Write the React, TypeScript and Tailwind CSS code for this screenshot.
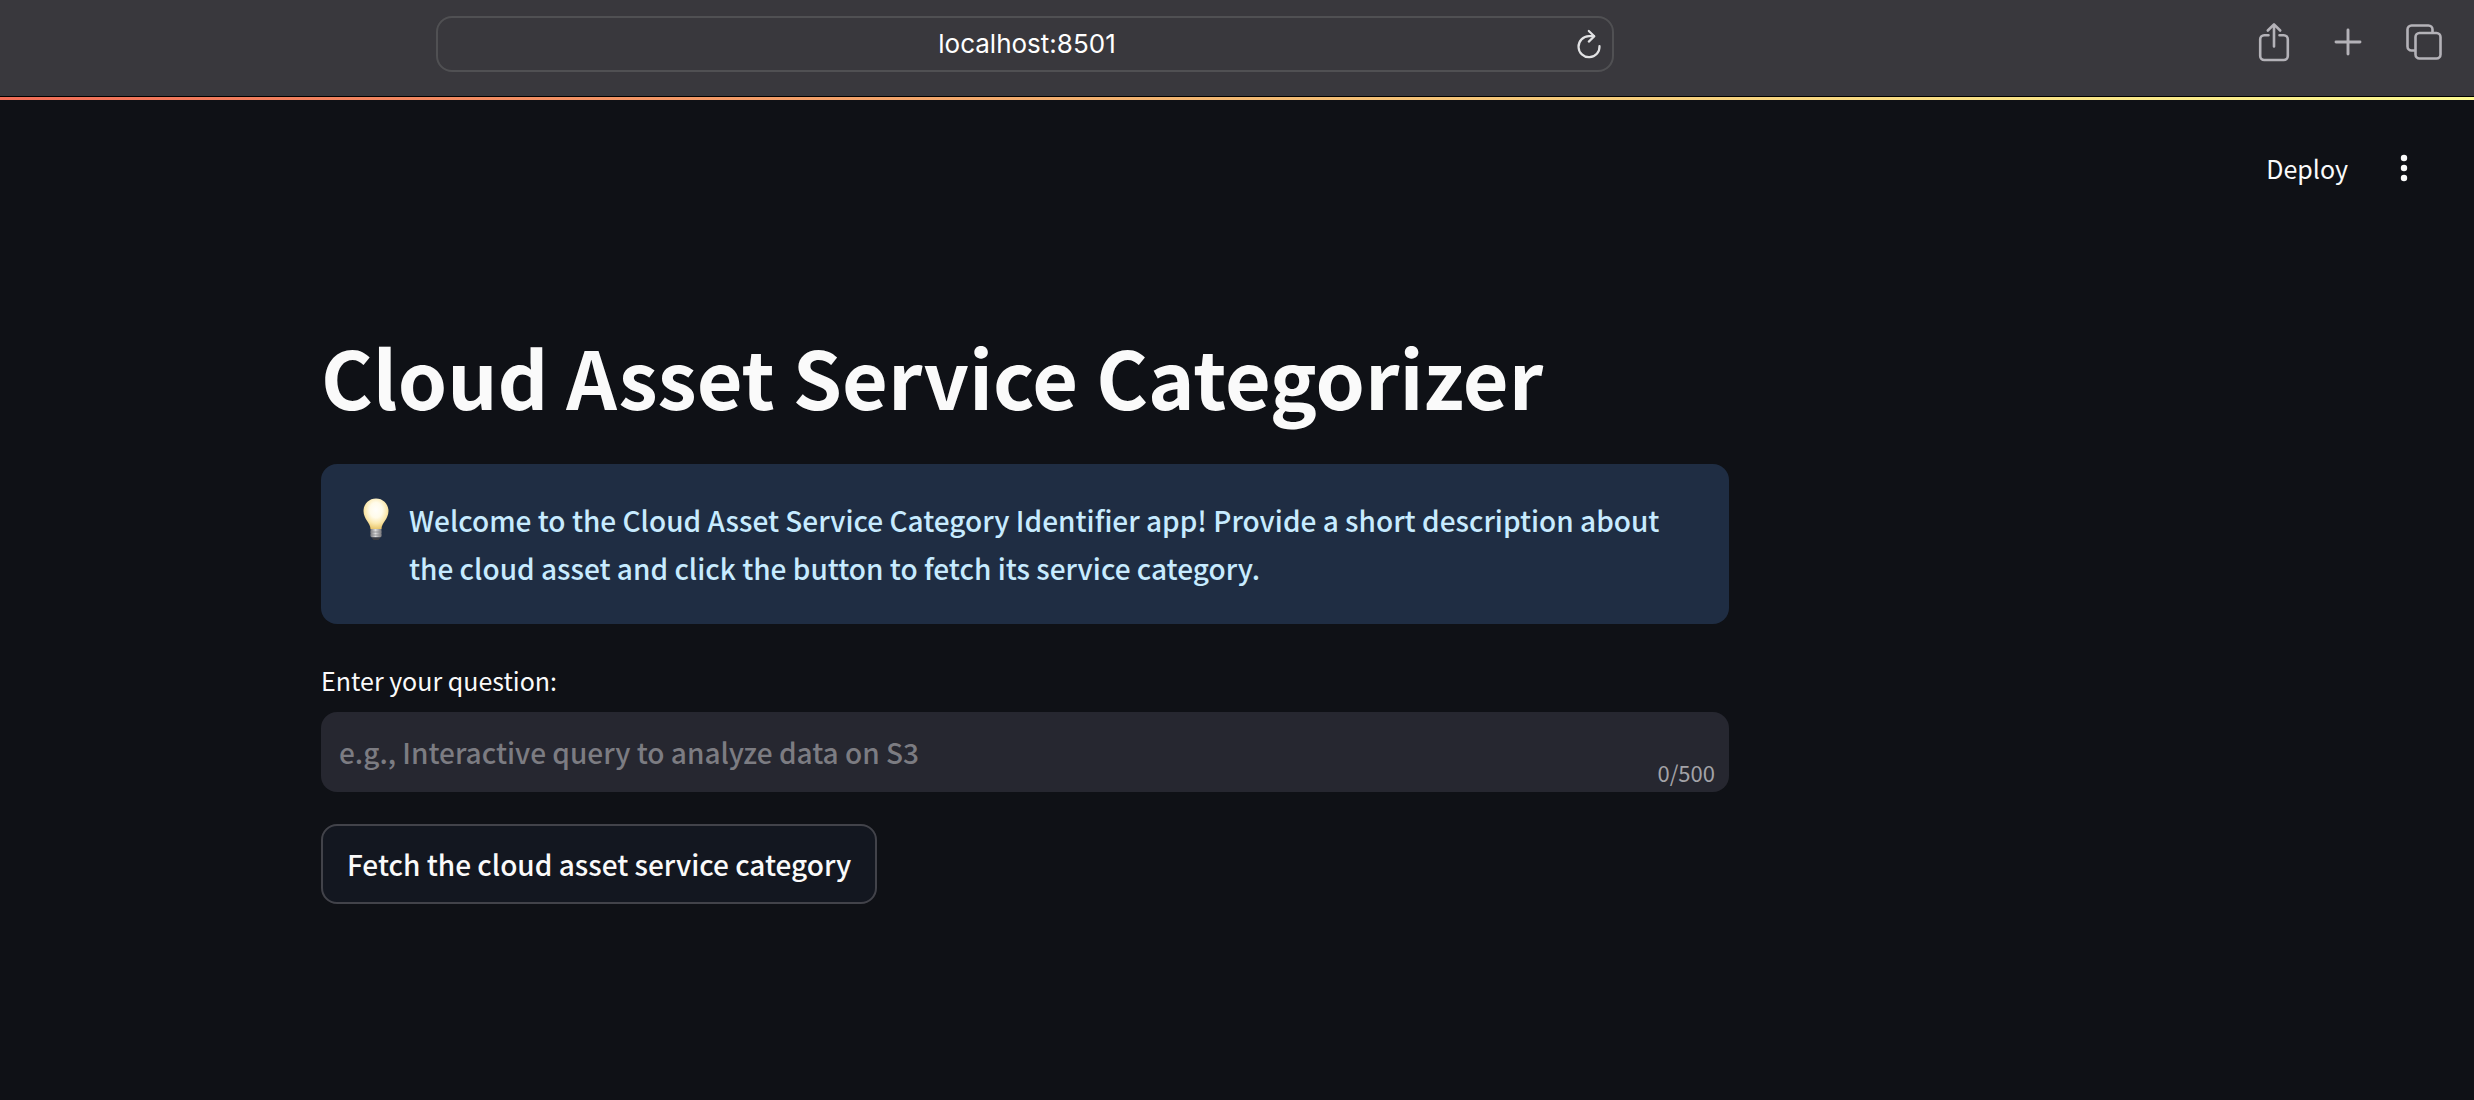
import { useState } from "react";

function ReloadIcon() {
  return (
    <svg width="26" height="30" viewBox="0 0 26 30" fill="none" stroke="#e2e2e4" strokeWidth="2.2" strokeLinecap="round" strokeLinejoin="round" aria-hidden="true">
      <path d="M23.5 17A10.5 10.5 0 1 1 13 7.2H18" />
      <path d="M12.8 2 18.3 7.2 12.8 12.6" />
    </svg>
  );
}

function ShareIcon() {
  return (
    <svg width="32" height="40" viewBox="0 0 32 40" fill="none" stroke="#b4b2b8" strokeWidth="2.6" strokeLinecap="round" strokeLinejoin="round" aria-hidden="true">
      <path d="M10.500 13.200H6.200a4 4 0 0 0-4 4V34a4 4 0 0 0 4 4h19.600a4 4 0 0 0 4-4V17.200a4 4 0 0 0-4-4H21.500" />
      <path d="M16 24.500V2.500M9.800 8.500 16 2.300 22.200 8.500" />
    </svg>
  );
}

function PlusIcon() {
  return (
    <svg width="28" height="28" viewBox="0 0 28 28" fill="none" stroke="#b4b2b8" strokeWidth="2.900" strokeLinecap="round" aria-hidden="true">
      <path d="M14 2v24M2 14h24" />
    </svg>
  );
}

function TabsIcon() {
  return (
    <svg width="36" height="36" viewBox="0 0 36 36" fill="none" stroke="#b4b2b8" strokeWidth="2.600" strokeLinejoin="round" aria-hidden="true">
      <rect x="9.500" y="9" width="25" height="25.500" rx="4" />
      <path d="M9.500 26.500H5.500a4 4 0 0 1-4-4V5.500a4 4 0 0 1 4-4H22.500a4 4 0 0 1 4 4V9" />
    </svg>
  );
}

function BulbIcon() {
  return (
    <svg width="26" height="44" viewBox="0 0 26 44" aria-hidden="true">
      <defs>
        <radialGradient id="glass" cx="0.5" cy="0.38" r="0.62">
          <stop offset="0" stopColor="#fffefa" />
          <stop offset="0.4" stopColor="#fffbea" />
          <stop offset="0.7" stopColor="#fbe9b0" />
          <stop offset="1" stopColor="#e9c76d" />
        </radialGradient>
        <linearGradient id="cap" x1="0" x2="1" y1="0" y2="0">
          <stop offset="0" stopColor="#77777a" />
          <stop offset="0.45" stopColor="#dcdcdc" />
          <stop offset="1" stopColor="#77777a" />
        </linearGradient>
      </defs>
      <path d="M7.500 33C7.500 27 .5 23 .5 15 .5 7.800 6 2.500 13 2.500S25.500 7.800 25.500 15c0 8-7 12-7 18z" fill="url(#glass)" />
      <path d="M7.500 33h11v7.500l-1.500 1H9l-1.500-1z" fill="url(#cap)" />
      <path d="M7.500 36h11M7.500 39h11" stroke="#8b8b8d" strokeWidth="0.8" />
      <path d="M8.500 41.500h9L15.500 44h-5z" fill="#3c3d42" />
    </svg>
  );
}

function BrowserBar() {
  return (
    <header className="flex h-24 bg-[#39383d] pt-4">
      <div className="ml-[436px] flex h-14 grow items-center rounded-2xl border-2 border-[#505053] pr-[10px]">
        <input
          aria-label="Address"
          defaultValue="localhost:8501"
          className="min-w-0 grow bg-transparent pl-10 text-center font-['Inter',sans-serif] text-[26px] font-normal text-white outline-none"
        />
        <button type="button" aria-label="Reload page"><ReloadIcon /></button>
      </div>
      <nav aria-label="Browser tools" className="flex h-[52px] w-[860px] shrink-0 items-center justify-end gap-11 pr-8">
        <button type="button" aria-label="Share"><ShareIcon /></button>
        <button type="button" aria-label="New tab"><PlusIcon /></button>
        <button type="button" aria-label="Show tabs"><TabsIcon /></button>
      </nav>
    </header>
  );
}

export default function App() {
  const [question, setQuestion] = useState("");
  return (
    <div className="min-h-screen bg-[#0f1116] font-['Noto_Sans_CJK_SC',sans-serif] text-[28px] leading-12 font-medium text-[#fafafa]">
      <BrowserBar />
      <div className="h-1 border-t border-black bg-linear-to-r from-[#f06d57] via-[#f2b872] to-[#fbf990]" />
      <div className="flex items-center justify-end gap-[52px] pt-11 pr-[66px]">
        <button type="button" className="text-[25px] font-normal">Deploy</button>
        <button type="button" aria-label="Main menu">
          <svg width="8" height="28" viewBox="0 0 8 28" fill="#fafafa" aria-hidden="true">
            <circle cx="4" cy="4" r="3.200" />
            <circle cx="4" cy="14" r="3.200" />
            <circle cx="4" cy="24" r="3.200" />
          </svg>
        </button>
      </div>
      <div className="pr-[424px]">
        <main className="mx-auto flex w-full max-w-[1408px] flex-col items-start pt-[132px]">
          <h1 className="text-[79px] leading-[104px] font-bold">Cloud Asset Service Categorizer</h1>
          <div role="status" className="mt-9 flex w-full gap-5 rounded-2xl bg-[#1f2d43] py-8 pr-8 pl-[42px] text-[#c7ebff]">
            <span className="shrink-0"><BulbIcon /></span>
            <p>Welcome to the Cloud Asset Service Category Identifier app! Provide a short description about the cloud asset and click the button to fetch its service category.</p>
          </div>
          <label htmlFor="question" className="mt-8 text-[25px] font-normal">Enter your question:</label>
          <div className="relative mt-2 w-full">
            <input
              id="question"
              maxLength={500}
              value={question}
              onChange={(e) => setQuestion(e.target.value)}
              placeholder="e.g., Interactive query to analyze data on S3"
              className="h-20 w-full rounded-2xl bg-[#262730] px-[18px] outline-none placeholder:text-[#7c7c82]"
            />
            <span className="absolute right-[14px] bottom-0 text-[22px] leading-10 font-normal text-[#a3a3a8]">{question.length}/500</span>
          </div>
          <button type="button" className="mt-8 h-20 rounded-2xl border-2 border-[#42434a] bg-[#131720] px-6">
            Fetch the cloud asset service category
          </button>
        </main>
      </div>
    </div>
  );
}
